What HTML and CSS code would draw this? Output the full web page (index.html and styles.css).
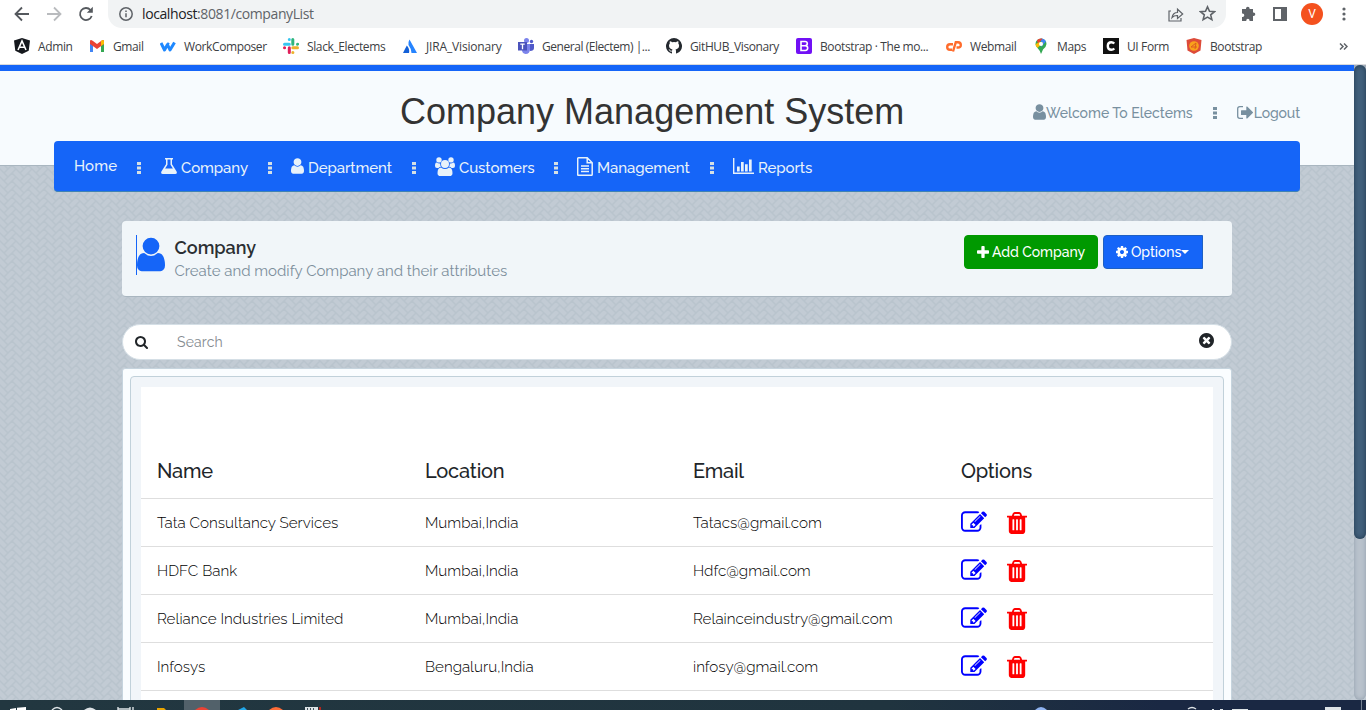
FILE: index.html
```html
<!DOCTYPE html>
<html lang="en">
<head>
<meta charset="utf-8">
<title>Company Management System</title>
<link rel="stylesheet" href="styles.css">
</head>
<body>
<svg class="sprite" aria-hidden="true">
<symbol id="user" viewBox="256 128 1280 1536"><path d="M1536 1399q0 109-62.500 187t-150.500 78h-854q-88 0-150.500-78t-62.500-187q0-85 8.500-160.500t31.500-152 58.500-131 94-89 134.500-34.500q131 128 313 128t313-128q76 0 134.500 34.500t94 89 58.500 131 31.500 152 8.500 160.500zm-256-887q0 159-112.500 271.500t-271.500 112.500-271.500-112.500-112.500-271.500 112.500-271.500 271.500-112.500 271.500 112.500 112.500 271.500z"/></symbol>
<symbol id="search" viewBox="64 128 1664 1664"><path d="M1216 832q0-185-131.500-316.500t-316.500-131.500-316.500 131.500-131.500 316.500 131.500 316.500 316.500 131.500 316.500-131.500 131.500-316.500zm512 832q0 52-38 90t-90 38q-54 0-90-38l-343-342q-179 124-399 124-143 0-273.500-55.500t-225-150-150-225-55.500-273.500 55.500-273.500 150-225 225-150 273.500-55.500 273.500 55.500 225 150 150 225 55.500 273.500q0 220-124 399l343 343q37 37 37 90z"/></symbol>
<symbol id="plus" viewBox="192 128 1408 1408"><path d="M1600 736v192q0 40-28 68t-68 28h-416v416q0 40-28 68t-68 28h-192q-40 0-68-28t-28-68v-416h-416q-40 0-68-28t-28-68v-192q0-40 28-68t68-28h416v-416q0-40 28-68t68-28h192q40 0 68 28t28 68v416h416q40 0 68 28t28 68z"/></symbol>
<symbol id="cog" viewBox="128 128 1536 1536"><path d="M1152 896q0-106-75-181t-181-75-181 75-75 181 75 181 181 75 181-75 75-181zm512-109v222q0 12-8 23t-20 13l-185 28q-19 54-39 91 35 50 107 138 10 12 10 25t-9 23q-27 37-99 108t-94 71q-12 0-26-9l-138-108q-44 23-91 38-16 136-29 186-7 28-36 28h-222q-14 0-24.500-8.500t-11.500-21.500l-28-184q-49-16-90-37l-141 107q-10 9-25 9-14 0-25-11-126-114-165-168-7-10-7-23 0-12 8-23 15-21 51-66.500t54-70.500q-27-50-41-99l-183-27q-13-2-21-12.500t-8-23.500v-222q0-12 8-23t19-13l186-28q14-46 39-92-40-57-107-138-10-12-10-24 0-10 9-23 26-36 98.500-107.500t94.500-71.500q13 0 26 10l138 107q44-23 91-38 16-136 29-186 7-28 36-28h222q14 0 24.500 8.500t11.500 21.500l28 184q49 16 90 37l142-107q9-9 24-9 13 0 25 10 129 119 165 170 7 8 7 22 0 12-8 23-15 21-51 66.500t-54 70.500q26 50 41 98l183 28q13 2 21 12.500t8 23.500z"/></symbol>
<symbol id="clear" viewBox="128 128 1536 1536"><path d="M1277 1122q0-26-19-45l-181-181 181-181q19-19 19-45 0-27-19-46l-90-90q-19-19-46-19-26 0-45 19l-181 181-181-181q-19-19-45-19-27 0-46 19l-90 90q-19 19-19 46 0 26 19 45l181 181-181 181q-19 19-19 45 0 27 19 46l90 90q19 19 46 19 26 0 45-19l181-181 181 181q19 19 45 19 27 0 46-19l90-90q19-19 19-46zm387-226q0 209-103 385.500t-279.500 279.500-385.500 103-385.500-103-279.500-279.500-103-385.500 103-385.500 279.500-279.500 385.500-103 385.500 103 279.500 279.500 103 385.500z"/></symbol>
<symbol id="edit" viewBox="0 128 1792 1408"><path d="M888 1184l116-116-152-152-116 116v56h96v96h56zm440-720q-16-16-33 1l-350 350q-17 17-1 33t33-1l350-350q17-17 1-33zm80 594v190q0 119-84.500 203.500t-203.500 84.500h-832q-119 0-203.500-84.500t-84.500-203.500v-832q0-119 84.500-203.500t203.500-84.500h832q63 0 117 25 15 7 18 23 3 17-9 29l-49 49q-14 14-32 8-23-6-45-6h-832q-66 0-113 47t-47 113v832q0 66 47 113t113 47h832q66 0 113-47t47-113v-126q0-13 9-22l64-64q15-15 35-7t20 29zm-96-738l288 288-672 672h-288v-288zm444 132l-92 92-288-288 92-92q28-28 68-28t68 28l152 152q28 28 28 68t-28 68z"/></symbol>
<symbol id="trash" viewBox="192 128 1408 1536"><path d="M704 1376v-704q0-14-9-23t-23-9h-64q-14 0-23 9t-9 23v704q0 14 9 23t23 9h64q14 0 23-9t9-23zm256 0v-704q0-14-9-23t-23-9h-64q-14 0-23 9t-9 23v704q0 14 9 23t23 9h64q14 0 23-9t9-23zm256 0v-704q0-14-9-23t-23-9h-64q-14 0-23 9t-9 23v704q0 14 9 23t23 9h64q14 0 23-9t9-23zm-544-992h448l-48-117q-7-9-17-11h-317q-10 2-17 11zm928 32v64q0 14-9 23t-23 9h-96v948q0 83-47 143.500t-113 60.500h-832q-66 0-113-58.500t-47-141.500v-952h-96q-14 0-23-9t-9-23v-64q0-14 9-23t23-9h309l70-167q15-37 54-63t79-26h320q40 0 79 26t54 63l70 167h309q14 0 23 9t9 23z"/></symbol>
<symbol id="dots" viewBox="0 0 4 12"><path d="M0 0h4v3H0zM0 4.500h4v3H0zM0 9h4v3H0z"/></symbol>
<symbol id="flask" viewBox="0 0 16 16"><path fill-rule="evenodd" d="M4 0h8v1.500h-1v4.800l4.600 7.200Q16.600 16 14 16H2Q-.6 16 .4 13.500L5 6.300V1.500H4zM6.500 1.500v5.200L4.100 10.500h7.800L9.500 6.700V1.500z"/></symbol>
<symbol id="users" viewBox="0 0 20 19"><circle cx="4" cy="2.900" r="2.700"/><circle cx="16" cy="2.900" r="2.700"/><circle cx="10" cy="7" r="4"/><path d="M5.200 6.500Q5 8.200 6 9.800 4.500 9.800 3.500 11H2Q0 11 0 9 0 5.500 1.500 5.500 3.500 6.800 5.200 6.500zM14.800 6.500Q15 8.200 14 9.800q1.500 0 2.500 1.200H18q2 0 2-2 0-3.500-1.500-3.500-2 1.300-3.700 1zM6 10.500q4 3 8 0 3.500.2 3.500 5.700 0 2.800-3 2.800h-9q-3 0-3-2.800 0-5.500 3.500-5.700z"/></symbol>
<symbol id="file" viewBox="0 0 16 19"><path fill="none" stroke="currentColor" stroke-width="1.500" d="M1.500.8h8.700l5 5v11.700q0 .8-.8.800H1.500q-.8 0-.8-.8V1.500q0-.7.800-.7zM10.200.8v5h5M4 9h8M4 11.700h8M4 14.400h8"/></symbol>
<symbol id="chart" viewBox="0 0 21 16"><path d="M0 0h1.400v14.600H21V16H0zM4 8.500h2.700v5H4zM8 4h2.700v9.500H8zM12 6.200h2.700v7.300H12zM16 1.500h2.700v12H16z"/></symbol>
<symbol id="logout" viewBox="0 0 16 13"><path fill="none" stroke="currentColor" stroke-width="1.300" d="M6 .7H2.800Q.7.700.7 2.700v7.600q0 2 2.100 2H6"/><path d="M4.500 4.200h4.800V.8q.6-.6 1.200 0L16 6.200v.6l-5.500 5.400q-.6.600-1.200 0V8.900H4.500q-.5 0-.5-.5V4.700q0-.5.500-.5z"/></symbol>
</svg>

<header class="browser">
  <div class="toolbar">
    <svg class="tool back" viewBox="0 0 16 16"><path d="M15 8H2M8 1.500L1.500 8 8 14.500"/></svg>
    <svg class="tool forward" viewBox="0 0 16 16"><path d="M1 8h13M8 1.500L14.500 8 8 14.500"/></svg>
    <svg class="tool reload" viewBox="0 0 16 16"><path d="M13.700 10A6 6 0 1 1 12.500 4"/><path class="solid" d="M14.800.8v6H8.800z"/></svg>
    <div class="address">
      <svg class="info" viewBox="0 0 14 14"><circle cx="7" cy="7" r="6.200"/><path d="M7 6.200v4M7 3.500v1.500"/></svg>
      <span class="url">localhost<span class="path">:8081/companyList</span></span>
      <svg class="share" viewBox="0 0 16 15"><path d="M3 4H1v10h12v-3M4 10.500Q5 5.500 9.500 5.500V2.200L14.700 7 9.500 11.500V8.500Q6 8.300 4 10.500z"/></svg>
      <svg class="star" viewBox="0 0 16 16"><path d="M8 1.700l1.900 4.200 4.600.4-3.500 3 1.100 4.500L8 11.400l-4.100 2.400L5 9.300l-3.500-3 4.600-.4z"/></svg>
    </div>
    <svg class="ext" viewBox="0 0 16 16"><path d="M6 3V2.500a1.800 1.800 0 0 1 3.600 0V3H13v3.500h.5a1.800 1.800 0 0 1 0 3.600H13V15H9.500v-.7a1.600 1.600 0 0 0-3.200 0v.7H2v-4h.6a1.700 1.700 0 0 0 0-3.400H2V3z"/></svg>
    <svg class="side" viewBox="0 0 14 14"><path d="M0 0h14v14H0zM2 2v10h6V2z" fill-rule="evenodd"/></svg>
    <span class="avatar">V</span>
    <svg class="more" viewBox="0 0 4 14"><circle cx="2" cy="2" r="1.600"/><circle cx="2" cy="7" r="1.600"/><circle cx="2" cy="12" r="1.600"/></svg>
  </div>
  <nav class="bookmarks">
    <a><svg viewBox="0 0 16 16"><path fill="#15181d" d="M8 0l8 2.500-1.300 10.300L8 16l-6.700-3.200L0 2.500z"/><path fill="none" stroke="#fff" stroke-width="1.600" d="M4 12L8 3l4 9M5.500 9.300h5"/></svg><span>Admin</span></a>
    <a><svg viewBox="0 0 16 16"><path fill="#4285f4" d="M1 4v10h3V6z"/><path fill="#34a853" d="M15 4v10h-3V6z"/><path fill="#ea4335" d="M1 3.500Q1 1 4 3l4 3 4-3q3-2 3 .5V6L8 11 1 6z"/><path fill="#fbbc04" d="M12 3q3-2 3 .5V6l-3 2z"/></svg><span>Gmail</span></a>
    <a><svg viewBox="0 0 16 16"><path fill="none" stroke="#1e88ff" stroke-width="3" stroke-linejoin="round" d="M1 5l3.500 7 3-5.500L10 12l4.500-7.500M7 5.500l2 1"/></svg><span>WorkComposer</span></a>
    <a><svg viewBox="0 0 16 16" fill="none" stroke-width="3" stroke-linecap="round"><path stroke="#36c5f0" d="M6.300 1.500v.1M1.500 6.200h4.800"/><path stroke="#2eb67d" d="M9.800 1.500v4.700M14.500 6.200h.1"/><path stroke="#ecb22e" d="M9.800 9.800h4.700M9.800 14.500h.1"/><path stroke="#e01e5a" d="M6.300 9.800v4.700M1.500 9.800h.1"/></svg><span>Slack_Electems</span></a>
    <a><svg viewBox="0 0 16 16"><path fill="#2684ff" d="M7.500 1.500L15 15H9.500Q9 10 6.500 7 6 4 7.500 1.500z"/><path fill="#1360d8" d="M4.800 7.500Q8 11 7 15H1z"/></svg><span class="loose">JIRA_Visionary</span></a>
    <a><svg viewBox="0 0 16 16"><circle cx="8.500" cy="2.500" r="2.500" fill="#7b83eb"/><circle cx="13.500" cy="3.500" r="1.700" fill="#5059c9"/><path fill="#5059c9" d="M11 6h5v4q0 3-4 3z"/><path fill="#7b83eb" d="M4 6h8v5q0 5-4.500 5Q4 15.500 4 12z"/><path fill="#4b53bc" d="M0 4h9v8.500H0z"/><path stroke="#fff" stroke-width="1.300" d="M2.300 6.200h4.400M4.500 6.200v5"/></svg><span class="tight">General (Electem) |...</span></a>
    <a><svg viewBox="0 0 16 16"><path fill="#24292f" d="M8 0a8 8 0 0 0-2.500 15.600q.5 0 .5-.5v-1.600c-2 .5-2.500-.9-2.700-1.300-.2-.4-.5-.7-.8-1 .9-.2 1.400.6 1.700 1 .5.900 1.300.7 1.900.4 0-.5.200-.9.400-1.100-2-.3-3.500-1.300-3.500-3.900 0-.9.300-1.600.8-2.200-.2-.7-.1-1.600.1-2.100.9 0 1.600.5 2.200.9a7 7 0 0 1 3.900 0c.6-.4 1.300-.9 2.200-.9.300.7.300 1.500.1 2.100.5.600.8 1.300.8 2.200 0 2.600-1.600 3.600-3.600 3.900.4.400.5.900.5 1.600v2q0 .5.500.5A8 8 0 0 0 8 0z"/></svg><span>GitHUB_Visonary</span></a>
    <a><svg viewBox="0 0 16 16"><rect width="16" height="16" rx="2" fill="#7110f5"/><path fill="none" stroke="#fff" stroke-width="1.600" d="M5 3.500h4q2.300 0 2.300 2.100T9 7.800H5h4.300q2.400 0 2.400 2.300T9.300 12.500H5z"/></svg><span>Bootstrap · The mo...</span></a>
    <a><svg viewBox="0 0 16 16"><path fill="none" stroke="#ff6c2c" stroke-width="2.400" d="M7 6.200H4Q1.200 6.200 1.200 9T4 11.800h2M7 13.500L9.800 4.200H12q2.800 0 2.800 2.700T12 9.500h-1.500"/></svg><span>Webmail</span></a>
    <a><svg viewBox="0 0 16 16"><path fill="#34a853" d="M2.500 6a5.500 5.500 0 0 1 11 0Q13.300 9 10 11.500 9 14 8 16 7 12.500 4.500 10 2.500 8 2.500 6z"/><path fill="#4285f4" d="M8 .5a5.500 5.500 0 0 1 5 3L8 9V4z"/><path fill="#ea4335" d="M4 2.200Q5.500.5 8 .5l1.500.3L5 6z"/><path fill="#fbbc04" d="M2.500 6q0 2 2 4L10 4.500 7 4z"/><circle cx="8" cy="6" r="2" fill="#fff"/></svg><span>Maps</span></a>
    <a><svg viewBox="0 0 16 16"><path fill="#111" d="M0 0h16v16H0z"/><path fill="none" stroke="#fff" stroke-width="2.400" d="M11.300 5.500Q10 4.200 8.300 4.200 4.800 4.200 4.800 8t3.500 3.800q1.700 0 3-1.300"/></svg><span>UI Form</span></a>
    <a><svg viewBox="0 0 16 16"><path fill="#dd4b39" d="M8 0l7.500 2-1 10.500L8 16l-6.500-3.500L.5 2z"/><circle cx="8" cy="8" r="4.800" fill="#f9a11b"/><path fill="none" stroke="#dd5b20" d="M5 9l5-4-1 6M5 9h6"/></svg><span>Bootstrap</span></a>
    <svg class="overflow" viewBox="0 0 9 7"><path d="M1 .5l3 3-3 3M5 .5l3 3-3 3"/></svg>
  </nav>
</header>

<main class="page">
  <div class="masthead">
    <h1>Company Management System</h1>
    <div class="account">
      <svg class="i-user"><use href="#user"/></svg><span class="welcome">Welcome To Electems</span>
      <svg class="i-dots"><use href="#dots"/></svg>
      <svg class="i-logout"><use href="#logout"/></svg><span class="logout">Logout</span>
    </div>
  </div>
  <nav class="menu">
    <a class="home">Home</a><svg class="i-dots"><use href="#dots"/></svg>
    <a><svg class="i-flask"><use href="#flask"/></svg><span>Company</span></a><svg class="i-dots"><use href="#dots"/></svg>
    <a><svg class="i-user"><use href="#user"/></svg><span>Department</span></a><svg class="i-dots"><use href="#dots"/></svg>
    <a><svg class="i-users"><use href="#users"/></svg><span>Customers</span></a><svg class="i-dots"><use href="#dots"/></svg>
    <a><svg class="i-file"><use href="#file"/></svg><span>Management</span></a><svg class="i-dots"><use href="#dots"/></svg>
    <a><svg class="i-chart"><use href="#chart"/></svg><span>Reports</span></a>
  </nav>
  <section class="intro">
    <div class="badge"><svg><use href="#user"/></svg></div>
    <div class="headline"><h2>Company</h2><p>Create and modify Company and their attributes</p></div>
    <button class="btn add"><svg><use href="#plus"/></svg><span>Add Company</span></button>
    <button class="btn options"><svg><use href="#cog"/></svg><span>Options</span><i class="caret"></i></button>
  </section>
  <div class="searchbar">
    <svg class="i-search"><use href="#search"/></svg><span class="placeholder">Search</span><svg class="i-clear"><use href="#clear"/></svg>
  </div>
  <section class="card"><div class="frame"><table>
    <thead><tr><th>Name</th><th>Location</th><th>Email</th><th>Options</th></tr></thead>
    <tbody>
    <tr><td>Tata Consultancy Services</td><td>Mumbai,India</td><td>Tatacs@gmail.com</td><td><svg class="i-edit"><use href="#edit"/></svg><svg class="i-trash"><use href="#trash"/></svg></td></tr>
    <tr><td>HDFC Bank</td><td>Mumbai,India</td><td>Hdfc@gmail.com</td><td><svg class="i-edit"><use href="#edit"/></svg><svg class="i-trash"><use href="#trash"/></svg></td></tr>
    <tr><td>Reliance Industries Limited</td><td>Mumbai,India</td><td>Relainceindustry@gmail.com</td><td><svg class="i-edit"><use href="#edit"/></svg><svg class="i-trash"><use href="#trash"/></svg></td></tr>
    <tr><td>Infosys</td><td>Bengaluru,India</td><td>infosy@gmail.com</td><td><svg class="i-edit"><use href="#edit"/></svg><svg class="i-trash"><use href="#trash"/></svg></td></tr>
    <tr><td></td><td></td><td></td><td></td></tr>
    </tbody>
  </table></div></section>
  <div class="scrollbar"><div class="thumb"></div></div>
</main>

<footer class="taskbar">
  <svg viewBox="0 0 1366 10">
    <path fill="#52616a" d="M184 0h36v10h-36z"/>
    <path fill="#fff" d="M10 9l6-1v2h-6zM17 7.800L26 7v3h-9z"/>
    <g fill="none" stroke="#dde3e6" stroke-width="1.400"><path d="M52 10q5-5 10 0M118 7v3M118 9h12M130 7v3M133 7v3M1188 9q4-3 8 0"/></g>
    <path fill="#dde3e6" d="M84 10q6-5 12 0zM305 7h13v3h-13zM1232 9h16v1h-16zM1325 7h16v3h-16zM1212 9h2v1h-2zM1220 9h3v1h-3z"/>
    <path fill="none" stroke="#42525b" d="M307.500 8v2M310.500 8v2M313.500 8v2"/><path fill="#b3261e" d="M319 7h2v3h-2z"/>
    <path fill="#e9a400" d="M157 8h7l2 2h-9z"/><path fill="#ea4335" d="M195 10q7-6 14 0z"/><path fill="#22a7e8" d="M238 10l6-3 3 3z"/><path fill="#ff6c37" d="M269 10q7-6 14 0z"/><path fill="#8fb3f0" d="M1035 10q6-6 12 0z"/>
    <path fill="#738090" d="M1361 0h1v10h-1z"/>
  </svg>
</footer>
</body>
</html>
```
FILE: styles.css
```css
* { box-sizing: border-box; }
body { margin: 0; width: 1366px; height: 710px; overflow: hidden; font-family: Raleway, Lato, "Open Sans", sans-serif; color: #212529; background: #fff; }
svg { display: block; flex: none; fill: currentColor; }
.sprite { display: none; }
h1, h2, p { margin: 0; }

.browser { height: 65px; border-bottom: 1px solid #d8d9dc; font-family: "Segoe UI", "Open Sans", sans-serif; }
.toolbar { height: 28px; display: flex; align-items: center; padding-left: 14px; color: #5f6368; }
.tool { width: 16px; height: 16px; margin-right: 16px; fill: none; stroke: #55595e; stroke-width: 1.8; }
.tool .solid { fill: #55595e; stroke: none; }
.forward { stroke: #b9bbbe; }
.reload { margin-right: 14px; }
.address { width: 1118px; height: 28px; border-radius: 0 0 14px 14px; background: #f1f3f4; display: flex; align-items: center; padding: 0 10px 0 11px; }
.info { width: 14px; height: 14px; fill: none; stroke: #5f6368; stroke-width: 1.5; }
.url { margin-left: 9px; font-size: 14px; line-height: 18px; letter-spacing: -0.4px; color: #202124; }
.path { color: #5f6368; }
.share { width: 16px; height: 15px; margin-left: auto; fill: none; stroke: #5f6368; stroke-width: 1.2; }
.star { width: 17px; height: 17px; margin: 0 0 1px 15px; fill: none; stroke: #5f6368; stroke-width: 1.5; }
.ext { width: 16px; height: 16px; margin-left: 14px; }
.side { width: 14px; height: 14px; margin-left: 17px; }
.avatar { width: 22px; height: 22px; margin-left: 14px; border-radius: 50%; background: #f4511e; color: #fff; font: 12px/22px "Roboto", sans-serif; text-align: center; }
.more { width: 4px; height: 14px; margin-left: 19px; }
.bookmarks { height: 36px; padding-left: 14px; display: grid; grid-template-columns: 75px 71px 123px 119px 116px 148px 130px 150px 87px 70px 83px 153px 9px; align-items: center; font-size: 12px; letter-spacing: -0.38px; color: #3c4043; }
.bookmarks a { display: flex; align-items: center; gap: 8px; white-space: nowrap; }
.bookmarks .tight { letter-spacing: -0.45px; }
.bookmarks .loose { letter-spacing: -0.16px; }
.bookmarks a svg { width: 16px; height: 16px; }
.bookmarks .overflow { width: 9px; height: 7px; fill: none; stroke: #5f6368; stroke-width: 1.5; }

.page { position: relative; height: 635px; overflow: hidden; background: #c2cbd4 url("data:image/svg+xml,%3Csvg xmlns='http://www.w3.org/2000/svg' width='16' height='8'%3E%3Cpath d='M-4 -20L8 -8M-4 -12L8 0M-4 -4L8 8M-4 4L8 16M12 -12L24 0M12 -4L24 8M12 4L24 16M16 -16L4 -4M16 -8L4 4M16 0L4 12M16 8L4 20M0 -8L-12 4M0 0L-12 12' fill='none' stroke='%23b9c4cd' stroke-width='1.5'/%3E%3C/svg%3E"); }
.masthead { height: 101px; border-top: 6px solid #1565f8; border-bottom: 1px solid #a9b6c0; background: #f7fbfe; padding: 0 66px 0 400px; display: flex; justify-content: space-between; }
.masthead h1 { margin-top: 20px; font: 400 36px/41px "Liberation Sans", Arial, sans-serif; color: #333; white-space: nowrap; }
.account { height: 84px; display: flex; align-items: center; color: #7890a0; font-size: 14px; font-weight: 500; white-space: nowrap; }
.i-user { width: 13px; height: 16px; }
.i-dots { width: 4px; height: 12px; }
.i-logout { width: 16px; height: 13px; }
.account .i-user { margin-bottom: 2px; }
.account .i-dots { margin: 0 20px 0 20px; }
.account .i-logout { margin: 0 1px 2px 0; }
.account .logout { letter-spacing: -0.1px; }
.menu { width: 1246px; height: 51px; margin: -25px 0 0 54px; position: relative; border-radius: 4px; border-bottom: 1px solid #3f83b4; background: #1565f8; padding-left: 20px; display: grid; grid-template-columns: 63px 24px 107px 23px 121px 23px 119px 23px 133px 23px auto; align-items: center; color: #e8f2fa; font-size: 15px; font-weight: 500; letter-spacing: -0.08px; }
.menu a { display: flex; align-items: center; gap: 4px; height: 50px; }
.menu a span { padding-top: 3px; }
.menu .home { letter-spacing: 0.1px; }
.menu .i-dots { margin-top: 3px; color: #d5e0e4; }
.i-flask { width: 16px; height: 16px; }
.i-users { width: 20px; height: 19px; }
.i-file { width: 16px; height: 19px; }
.i-chart { width: 21px; height: 16px; }

.intro { width: 1110px; height: 76px; margin: 29px 0 0 122px; border-radius: 4px; border-bottom: 1px solid #a9b6c0; background: #f1f6f9; padding: 14px 29px 0 14px; display: flex; align-items: flex-start; }
.badge { height: 40px; border-left: 1px solid #1565f8; padding-top: 2px; color: #1565f8; }
.badge svg { width: 28px; height: 35px; }
.headline { margin: 2px auto 0 9.5px; }
.headline h2 { font-size: 18px; line-height: 22px; font-weight: 600; color: #2b2f33; }
.headline p { font-size: 15px; line-height: 24px; color: #7d8f9c; }
.btn { height: 34px; border: 1px solid #090; border-radius: 4px; background: #090; color: #fff; font: 500 14px Raleway, Lato, sans-serif; letter-spacing: -0.04px; padding: 0 12px; display: flex; align-items: center; white-space: nowrap; }
.btn svg { width: 12px; height: 12px; margin-right: 3px; }
.add { width: 134px; }
.options { width: 100px; margin-left: 5px; border-color: #1e60c4; border-radius: 4px 0 0 4px; background: #1565f8; }
.caret { border: 4px solid transparent; border-top-color: #fff; border-bottom: 0; }
.searchbar { width: 1110px; height: 36px; margin: 27px 0 0 122px; border: 1px solid #d5dfe6; border-radius: 18px; background: #fff; display: flex; align-items: center; padding: 0 17px 0 12px; }
.i-search { width: 13px; height: 13px; }
.i-clear { width: 15px; height: 15px; margin: 0 0 3px auto; }
.placeholder { margin-left: 29px; font-size: 14px; letter-spacing: 0.15px; color: #858b90; }
.card { width: 1110px; height: 400px; margin: 8px 0 0 122px; border: 1px solid #c6d4de; border-radius: 3px; background: #fafdff; padding: 7px; }
.frame { height: 400px; border: 1px solid #c1d1da; border-radius: 4px; background: #f1f5f9; padding: 10px; }
table { width: 1072px; table-layout: fixed; border-collapse: collapse; background: #fff; }
th, td { padding: 0 16px; text-align: left; border-bottom: 1px solid #dedede; white-space: nowrap; }
th { height: 111px; padding-top: 57px; font-size: 20px; font-weight: 500; letter-spacing: -0.2px; }
td { height: 48px; padding-top: 2px; font-size: 15.2px; font-weight: 300; color: #000; }
td svg { display: inline-block; vertical-align: middle; }
.i-edit { width: 26px; height: 21px; margin-top: -4px; color: #00f; }
.i-trash { width: 20px; height: 22px; margin: -1px 0 0 20px; color: #f00; }
.scrollbar { position: absolute; top: 0; right: 0; width: 12px; height: 635px; border-radius: 0 0 6px 6px; background: #b9c2cc; box-shadow: inset 0 0 4px #8f9dab; }
.thumb { height: 474px; border-radius: 6px; background: #42607c; box-shadow: inset 0 0 5px #20394f; }
.taskbar { height: 10px; background: linear-gradient(90deg, #223740, #20343f 65%, #1a2843 85%); }
.taskbar svg { width: 1366px; height: 10px; }
```
